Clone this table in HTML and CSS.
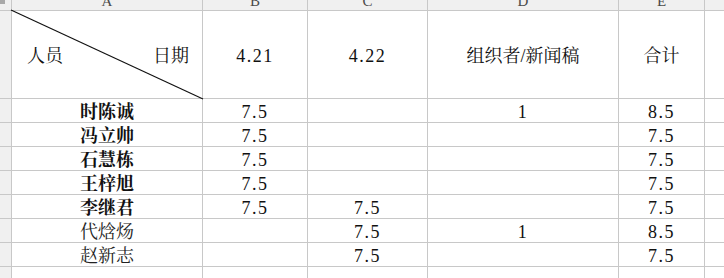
FILE: index.html
```html
<!DOCTYPE html>
<html lang="zh-CN">
<head>
<meta charset="utf-8">
<title>Sheet</title>
<link rel="stylesheet" href="styles.css">
</head>
<body>
<div class="sheet">
  <div class="hd corner"><div class="corner-mark"></div></div>
  <div class="hd col"><span>A</span></div>
  <div class="hd col"><span>B</span></div>
  <div class="hd col"><span>C</span></div>
  <div class="hd col"><span>D</span></div>
  <div class="hd col"><span>E</span></div>
  <div class="hd col"></div>

  <div class="hd rowh"></div>
  <div class="c title diag">
    <svg class="diag-line" viewBox="0 0 1 1" preserveAspectRatio="none"><line x1="0" y1="0" x2="1" y2="1" vector-effect="non-scaling-stroke"/></svg>
    <span>人员</span><span>日期</span>
  </div>
  <div class="c title num">4.21</div>
  <div class="c title num">4.22</div>
  <div class="c title">组织者/新闻稿</div>
  <div class="c title">合计</div>
  <div class="c"></div>

  <div class="hd rowh"></div>
  <div class="c name b">时陈诚</div>
  <div class="c num">7.5</div>
  <div class="c num"></div>
  <div class="c num">1</div>
  <div class="c num">8.5</div>
  <div class="c"></div>

  <div class="hd rowh"></div>
  <div class="c name b">冯立帅</div>
  <div class="c num">7.5</div>
  <div class="c num"></div>
  <div class="c num"></div>
  <div class="c num">7.5</div>
  <div class="c"></div>

  <div class="hd rowh"></div>
  <div class="c name b">石慧栋</div>
  <div class="c num">7.5</div>
  <div class="c num"></div>
  <div class="c num"></div>
  <div class="c num">7.5</div>
  <div class="c"></div>

  <div class="hd rowh"></div>
  <div class="c name b">王梓旭</div>
  <div class="c num">7.5</div>
  <div class="c num"></div>
  <div class="c num"></div>
  <div class="c num">7.5</div>
  <div class="c"></div>

  <div class="hd rowh"></div>
  <div class="c name b">李继君</div>
  <div class="c num">7.5</div>
  <div class="c num">7.5</div>
  <div class="c num"></div>
  <div class="c num">7.5</div>
  <div class="c"></div>

  <div class="hd rowh"></div>
  <div class="c name">代焓炀</div>
  <div class="c num"></div>
  <div class="c num">7.5</div>
  <div class="c num">1</div>
  <div class="c num">8.5</div>
  <div class="c"></div>

  <div class="hd rowh"></div>
  <div class="c name">赵新志</div>
  <div class="c num"></div>
  <div class="c num">7.5</div>
  <div class="c num"></div>
  <div class="c num">7.5</div>
  <div class="c"></div>

  <div class="hd rowh"></div>
  <div class="c"></div>
  <div class="c"></div>
  <div class="c"></div>
  <div class="c"></div>
  <div class="c"></div>
  <div class="c"></div>
</div>
</body>
</html>
```

FILE: styles.css
```css
html, body {
  margin: 0;
  padding: 0;
  background: #ffffff;
}

.sheet {
  width: 724px;
  height: 278px;
  overflow: hidden;
  display: grid;
  grid-template-columns: 11px 190px 104px 119px 190px 85px 19px;
  grid-template-rows: 10px 87px repeat(7, 23px) 12px;
  gap: 1px;
  background: #c8c8c8;
  font-family: "Liberation Serif", "Noto Serif CJK SC", "Noto Sans CJK SC", serif;
  font-size: 18px;
  color: #111111;
}

.hd {
  background: #f0f0f0;
}

.corner-mark {
  width: 5px;
  height: 4px;
  background: #a9a9a9;
}

.col {
  display: flex;
  justify-content: center;
  align-items: flex-end;
  overflow: hidden;
  padding-bottom: 2px;
  box-sizing: border-box;
}

.col span {
  font-family: "Liberation Serif", serif;
  font-size: 15px;
  line-height: 14px;
  color: #4a4a4a;
}

.c {
  background: #ffffff;
  display: flex;
  align-items: center;
  justify-content: center;
  line-height: 23px;
  padding-top: 3px;
  box-sizing: border-box;
  white-space: nowrap;
}

.title {
  padding-top: 4px;
}

.num {
  letter-spacing: 1.5px;
}

.name {
  color: #222222;
}

.name.b {
  font-weight: bold;
  color: #111111;
}

.diag {
  position: relative;
  justify-content: space-between;
  padding-left: 15px;
  padding-right: 13px;
}

.diag-line {
  position: absolute;
  left: -1px;
  top: -1px;
  width: calc(100% + 2px);
  height: calc(100% + 2px);
  overflow: visible;
}

.diag-line line {
  stroke: #111111;
  stroke-width: 1.2;
}
```
